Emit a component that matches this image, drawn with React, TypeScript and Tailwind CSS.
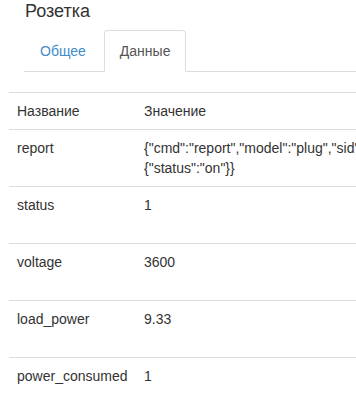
import React from "react";

const rows: { name: string; value: React.ReactNode }[] = [
  {
    name: "report",
    value: (
      <>
        <div className="whitespace-nowrap">{'{"cmd":"report","model":"plug","sid":"158d0001a2b3c4","short_id":40503,"data":'}</div>
        <div className="whitespace-nowrap">{'{"status":"on"}}'}</div>
      </>
    ),
  },
  { name: "status", value: "1" },
  { name: "voltage", value: "3600" },
  { name: "load_power", value: "9.33" },
  { name: "power_consumed", value: "1" },
];

export default function App() {
  return (
    <div className="w-[356px] h-[401px] overflow-hidden bg-white font-['Liberation_Sans',Arial,sans-serif] text-[14px] leading-[20px] text-[#333]">
      <div className="h-[30px] pl-[25px] pt-[1px] text-[18px] leading-[20px]">Розетка</div>
      <div className="ml-[24px] flex border-b border-[#ddd] w-[600px]">
        <div className="mr-[2px] -mb-px border border-transparent px-[15px] py-[10px] text-[#428bca]">Общее</div>
        <div className="-mb-px rounded-t-[4px] border border-[#ddd] border-b-white bg-white px-[15px] py-[10px] text-[#555]">Данные</div>
      </div>
      <div className="ml-[9px] mt-[20px] w-[700px]">
        <div className="flex h-[37px] border-t border-[#ddd]">
          <div className="w-[127px] shrink-0 p-[8px]">Название</div>
          <div className="p-[8px]">Значение</div>
        </div>
        {rows.map((r) => (
          <div key={r.name} className="flex h-[57px] border-t border-[#ddd]">
            <div className="w-[127px] shrink-0 p-[8px]">{r.name}</div>
            <div className="p-[8px]">{r.value}</div>
          </div>
        ))}
      </div>
    </div>
  );
}
